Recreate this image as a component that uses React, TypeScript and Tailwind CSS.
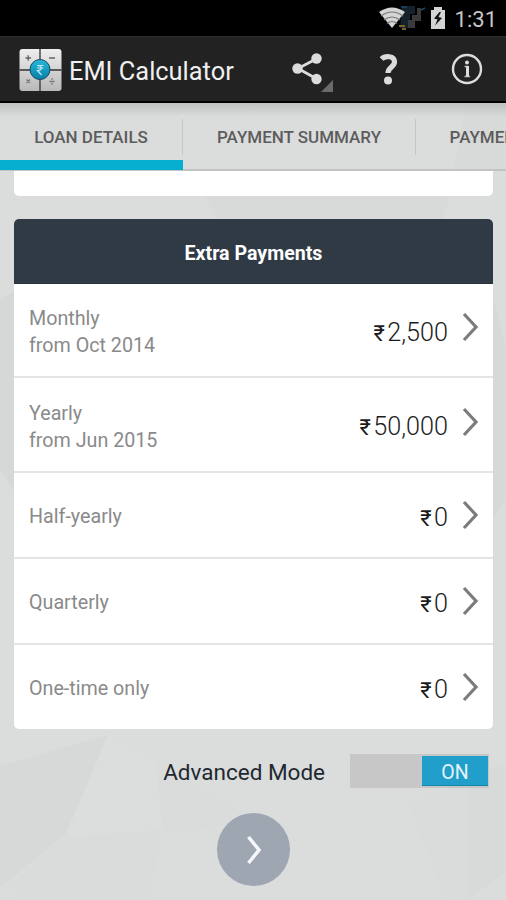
import { ReactNode } from "react";

type Payment = {
    label: string;
    from?: string;
    amount: string;
    height: string;
};

const payments: Payment[] = [
    { label: "Monthly", from: "from Oct 2014", amount: "2,500", height: "h-[94px]" },
    { label: "Yearly", from: "from Jun 2015", amount: "50,000", height: "h-[95px]" },
    { label: "Half-yearly", amount: "0", height: "h-[86px]" },
    { label: "Quarterly", amount: "0", height: "h-[86px]" },
    { label: "One-time only", amount: "0", height: "h-[84px]" },
];

function Backdrop() {
    return (
        <svg className="absolute inset-0 -z-10" width="506" height="900" viewBox="0 0 506 900">
            <rect width="506" height="900" fill="#dbdddc" />
            <path d="M0 298l15-6v200L0 470z" fill="#d5d8d7" />
            <path d="M205 196l12 24h225l8-24z" fill="#d8dada" />
            <path d="M467 103h39v67h-53z" fill="#d7dad9" />
            <path d="M492 290l14 60v150l-14 20z" fill="#d6d9d8" />
            <path d="M0 766l108-31-42 98-66 55z" fill="#d6d9d8" />
            <path d="M108 735l48 27 7 68-97 6z" fill="#dcdedd" />
            <path d="M66 836l97-6-15 70H20l-8-16z" fill="#dadcdb" />
            <path d="M156 762l104 60-97 10z" fill="#d9dcdb" />
            <path d="M408 802l60-20v118h-22z" fill="#dadcdb" />
            <path d="M468 775l38-12v108l-38 29z" fill="#d7dad9" />
            <path d="M350 795l46 82-70-62z" fill="#dadddc" />
        </svg>
    );
}

function StatusBar() {
    return (
        <div className="flex h-9 items-center justify-end bg-black pr-[9px]">
            <svg width="48" height="28" viewBox="0 0 48 28">
                <path d="M24 2h13v8h-5v14H22z" fill="#16222b" />
                <path d="M39 4h4v13h-6v7h-7v-8h4v-5h5z" fill="#3a3a3a" />
                <path d="M23 3h6M43 6l4-2" stroke="#164a6e" strokeWidth="1.5" />
                <path d="M21 22h6M24 25h4" stroke="#7a6220" strokeWidth="2" />
                <path d="M1 8Q14-1 27 8L14 24z" fill="#d4d4d4" />
                <path d="M3 12q11-8 22 0M6 16q8-6 16 0M9 19.500q5-4 10 0" fill="none" stroke="#777" strokeWidth="1.100" />
            </svg>
            <svg className="ml-1 mr-[9px]" width="16" height="24" viewBox="0 0 16 24">
                <path d="M4 1h8v3h3v19H1V4h3z" fill="#d4d4d4" />
                <path d="M9.500 6L4 12.500l3.500 1L5 19.500l7-7.500-3.500-1L11 6z" fill="#111" />
            </svg>
            <span className="pt-[3px] text-[22px] leading-none text-[#c8c8c8]">1:31</span>
        </div>
    );
}

function AppIcon() {
    return (
        <svg className="mt-px" width="44" height="44" viewBox="0 0 44 44">
            <defs>
                <linearGradient id="keys" x1="0" y1="0" x2="0" y2="1">
                    <stop offset="0" stopColor="#eeeeee" />
                    <stop offset="1" stopColor="#b9b9b9" />
                </linearGradient>
                <linearGradient id="coin" x1="0" y1="0" x2="0" y2="1">
                    <stop offset="0" stopColor="#27b9dd" />
                    <stop offset="1" stopColor="#087fa6" />
                </linearGradient>
            </defs>
            <rect x="0.500" y="1" width="42" height="42" rx="3" fill="url(#keys)" />
            <path d="M21 1v42M0.500 22h42" stroke="#333" strokeWidth="1.300" />
            <path d="M6.500 10h5.500M9.200 7.200v5.500M30 10h6" stroke="#666" strokeWidth="1.400" />
            <path d="M7.500 31.500l3.500 3.500M11 31.500l-3.500 3.500M30.500 33.500h5" stroke="#777" strokeWidth="1.400" />
            <circle cx="33" cy="31" r="1" fill="#888" />
            <circle cx="33" cy="36" r="1" fill="#888" />
            <circle cx="21" cy="21.500" r="10" fill="url(#coin)" stroke="#174a5b" strokeWidth="1" />
            <path d="M18 17.500h6.500M18 20h6.500M18.500 17.500c5 0 5 5 0 5l4 4.500" fill="none" stroke="#c3ebf5" strokeWidth="1.200" />
        </svg>
    );
}

function ActionBar() {
    return (
        <header className="flex h-[67px] items-center border-t border-b-2 border-t-[#303030] border-b-black bg-[#222222] pl-[19px]">
            <AppIcon />
            <h1 className="ml-[6px] mt-[5px] w-[222px] whitespace-nowrap text-[25.400px] leading-none text-[#f0f0f0]">EMI Calculator</h1>
            <svg className="mt-[5px]" width="42" height="42" viewBox="0 0 42 42">
                <path d="M26 7.500L7 17.500L26 28" fill="none" stroke="#dcdcdc" strokeWidth="2.800" />
                <circle cx="25.500" cy="7.500" r="5.200" fill="#dcdcdc" />
                <circle cx="6.500" cy="17.500" r="5.200" fill="#dcdcdc" />
                <circle cx="25.500" cy="28" r="5.200" fill="#dcdcdc" />
                <path d="M42 29v12H30z" fill="#6b6b6b" />
            </svg>
            <svg className="ml-[46px]" width="20" height="32" viewBox="0 0 20 32">
                <path d="M2.500 6C6 2.500 15.500 2.500 15.500 9c0 5-6.500 5-6.500 11" fill="none" stroke="#dcdcdc" strokeWidth="5.200" />
                <circle cx="9" cy="27.500" r="4" fill="#dcdcdc" />
            </svg>
            <svg className="ml-[52px] shrink-0" width="32" height="32" viewBox="0 0 32 32">
                <circle cx="16" cy="16" r="14" fill="none" stroke="#dcdcdc" strokeWidth="2.400" />
                <circle cx="16" cy="9.500" r="2" fill="#dcdcdc" />
                <path d="M13.500 13.500h3V23M13.500 23.500h5.500" fill="none" stroke="#b8b8b8" strokeWidth="1.300" />
                <path d="M16.500 13v10.500" stroke="#dcdcdc" strokeWidth="3" />
            </svg>
        </header>
    );
}

function Tab({ children, active, className }: { children: ReactNode; active?: boolean; className: string }) {
    return (
        <div className={`flex shrink-0 flex-col ${className}`}>
            <div className="mt-4 flex h-9 items-center justify-center border-r border-[#c5c8c7] pt-px text-[17px] font-medium leading-none text-[#5c5c5c]">
                {children}
            </div>
            {active && <div className="mt-[5px] h-[10px] bg-[#06aed0]" />}
        </div>
    );
}

function Tabs() {
    return (
        <nav className="flex h-[68px] overflow-hidden whitespace-nowrap bg-linear-to-b from-[#bfc1c0] to-transparent to-20% shadow-[inset_0_-2px_0_#c2c4c3]">
            <Tab active className="w-[183px]">LOAN DETAILS</Tab>
            <Tab className="w-[233px]">PAYMENT SUMMARY</Tab>
            <Tab className="w-[204px]">PAYMENT CHART</Tab>
        </nav>
    );
}

function PaymentRow({ payment }: { payment: Payment }) {
    return (
        <li className={`flex items-center border-b-2 border-[#e4e4e4] pl-[15px] pr-[13px] last:border-b-0 ${payment.height}`}>
            <div className={`flex-1 text-[19.700px] leading-[27px] text-[#8a8a8a] ${payment.from ? "pt-[4px]" : "pt-[2px]"}`}>
                <div>{payment.label}</div>
                {payment.from && <div>{payment.from}</div>}
            </div>
            <div className="mt-[5px] text-[25.200px] font-light leading-none text-[#1c1c1c]">
                <span className="mr-[2.500px] text-[22px] font-normal">₹</span>
                {payment.amount}
            </div>
            <svg className={`ml-[14px] ${payment.from ? "-mt-[6px]" : ""}`} width="18" height="32" viewBox="0 0 18 32">
                <path d="M2 3l12 13L2 29" fill="none" stroke="#7c7c7c" strokeWidth="3.200" />
            </svg>
        </li>
    );
}

export default function App() {
    return (
        <div className="relative isolate flex h-[900px] w-[506px] flex-col overflow-hidden font-['Roboto','Noto_Sans',sans-serif]">
            <Backdrop />
            <StatusBar />
            <ActionBar />
            <Tabs />
            <main className="flex flex-col px-[14px]">
                <div className="mr-[-1px] h-[25px] rounded-b-[5px] bg-white" />
                <section className="mr-[-1px] mt-[23px] overflow-hidden rounded-[5px] bg-white">
                    <h2 className="flex h-[65px] items-center justify-center border-b border-[#253240] bg-[#303a45] pt-[5px] text-[19.600px] font-bold text-white">
                        Extra Payments
                    </h2>
                    <ul>
                        {payments.map(payment => (
                            <PaymentRow key={payment.label} payment={payment} />
                        ))}
                    </ul>
                </section>
                <div className="mt-[25px] flex h-[34px] items-center justify-end pr-[3px]">
                    <span className="pt-[3px] text-[22.500px] leading-none text-[#222831]">Advanced Mode</span>
                    <div className="ml-[25px] flex h-[34px] w-[139px] justify-end bg-[#c7c7c7] p-px pt-[2px]">
                        <div className="flex h-[30px] w-[66px] items-center justify-center border-b border-[#1585ab] bg-[#219fca] pt-[4px] text-[19.500px] leading-none text-[#e4f5fb]">
                            ON
                        </div>
                    </div>
                </div>
                <button className="ml-px mt-[25px] flex size-[73px] items-center justify-center self-center rounded-full bg-[#9da6b1]">
                    <svg width="18" height="32" viewBox="0 0 18 32">
                        <path d="M3.500 3l10.500 13L3.500 29" fill="none" stroke="#f6f8fa" strokeWidth="3.500" />
                    </svg>
                </button>
            </main>
        </div>
    );
}
